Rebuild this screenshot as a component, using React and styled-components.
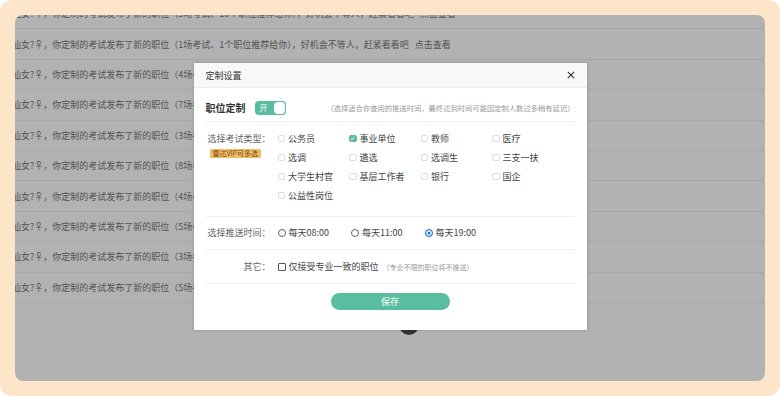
import React from 'react';
import styled, { createGlobalStyle, css } from 'styled-components';

const GlobalStyle = createGlobalStyle`
  html, body {
    margin: 0;
    padding: 0;
    background: #fff;
  }
  body {
    font-family: "Noto Sans CJK SC", "Noto Sans", sans-serif;
  }
  * { box-sizing: border-box; }
`;

const Frame = styled.div`
  width: 780px;
  height: 396px;
  padding: 15px;
  background: #fde5ca;
  border-radius: 12px;
`;

const Panel = styled.div`
  position: relative;
  height: 366px;
  background: #fff;
  border-radius: 8px;
  overflow: hidden;
`;

const List = styled.ul`
  list-style: none;
  margin: -16px 0 0 -3px;
  padding: 0;
`;

const Row = styled.li`
  height: 30.4px;
  display: flex;
  align-items: center;
  border-bottom: 1px solid #eee;
  font-size: 9px;
  color: #777;
  white-space: nowrap;
`;

const More = styled.span`
  margin-left: 6px;
`;

const Pager = styled.div`
  display: flex;
  align-items: center;
  justify-content: center;
  gap: 14px;
  margin-top: 12px;
  padding-left: 106px;
  font-size: 9px;
  color: #333;
`;

const Page = styled.span`
  display: inline-flex;
  align-items: center;
  justify-content: center;
  min-width: 20px;
  height: 20px;
  border-radius: 10px;
  ${p => p.$active && css`
    background: #4a4a4a;
    color: #fff;
  `}
`;

const Overlay = styled.div`
  position: absolute;
  inset: 0;
  background: rgba(0, 0, 0, 0.3);
  display: flex;
  justify-content: center;
  align-items: flex-start;
  padding-top: 48px;
`;

const Modal = styled.div`
  width: 393px;
  background: #fff;
  box-shadow: 0 0 3px rgba(0, 0, 0, 0.2);
`;

const Header = styled.div`
  height: 25px;
  display: flex;
  align-items: center;
  justify-content: space-between;
  padding: 0 10px 0 12px;
  background: #f8f8f8;
  border-bottom: 1px solid #ececec;
  font-size: 9px;
  color: #333;
`;

const Close = styled.button`
  display: flex;
  align-items: center;
  justify-content: center;
  width: 12px;
  height: 12px;
  padding: 0;
  border: none;
  background: none;
  cursor: pointer;
`;

const Body = styled.div`
  padding: 0 12px;
`;

const TitleRow = styled.div`
  display: flex;
  align-items: center;
  padding: 12px 0 6px;
  border-bottom: 1px solid #eee;
`;

const Heading = styled.span`
  font-size: 10px;
  font-weight: bold;
  color: #333;
`;

const Toggle = styled.div`
  display: flex;
  align-items: center;
  justify-content: space-between;
  width: 31px;
  height: 14px;
  margin-left: 9px;
  padding: 1px 1px 1px 5px;
  background: #5bbd9f;
  border-radius: 4px;
  color: #fff;
  font-size: 8px;
`;

const Knob = styled.span`
  width: 11px;
  height: 12px;
  background: #fff;
  border-radius: 4px;
`;

const Hint = styled.span`
  margin-left: auto;
  font-size: 7.3px;
  color: #999;
`;

const Section = styled.div`
  display: flex;
  align-items: flex-start;
  padding: ${p => p.$pad};
  border-bottom: 1px solid #eee;
`;

const LabelCol = styled.div`
  width: 65px;
  flex-shrink: 0;
  display: flex;
  flex-direction: column;
  align-items: flex-end;
`;

const Label = styled.span`
  line-height: 19px;
  font-size: 9px;
  color: #666;
  white-space: nowrap;
`;

const Badge = styled.span`
  align-self: flex-start;
  margin: 1px 0 0 4px;
  height: 9px;
  line-height: 9px;
  padding: 0 3px;
  font-size: 7px;
  color: #7a4a12;
  background: #f0bd67;
  border-radius: 1.5px;
  white-space: nowrap;
`;

const Grid = styled.div`
  display: grid;
  grid-template-columns: repeat(4, 71.5px);
  grid-auto-rows: 19px;
  margin-left: 7px;
`;

const Line = styled.div`
  display: flex;
  align-items: center;
  height: 19px;
  margin-left: 7px;
`;

const Option = styled.label`
  display: flex;
  align-items: center;
  gap: 3px;
  width: ${p => p.$w || 'auto'};
  font-size: 9px;
  color: #444;
  white-space: nowrap;
`;

const Box = styled.span`
  display: inline-flex;
  align-items: center;
  justify-content: center;
  width: 7.5px;
  height: 7.5px;
  border: 1px solid #dcdcdc;
  border-radius: 2px;
  background: #fff;
  ${p => p.$checked && css`
    border-color: #5bbd9f;
    background: #5bbd9f;
  `}
`;

const Square = styled.span`
  width: 8px;
  height: 8px;
  border: 1px solid #555;
  border-radius: 1px;
  background: #fff;
`;

const Radio = styled.span`
  width: 8px;
  height: 8px;
  border-radius: 50%;
  border: 1px solid #666;
  background: #fff;
  ${p => p.$checked && css`
    border-color: #1a73e8;
    background: #1a73e8;
    box-shadow: inset 0 0 0 1.5px #fff;
  `}
`;

const Small = styled.span`
  margin-left: 1px;
  font-size: 7px;
  color: #999;
`;

const Footer = styled.div`
  display: flex;
  justify-content: center;
  padding: 9px 0 20px;
`;

const SaveButton = styled.button`
  width: 119px;
  height: 17px;
  border: none;
  border-radius: 9px;
  background: #5bbd9f;
  color: #fff;
  font-family: inherit;
  font-size: 9px;
  cursor: pointer;
`;

const rows = [
  [5, 10], [1, 1], [4, 6], [7, 12], [3, 5], [8, 15], [4, 7], [5, 9], [3, 4], [5, 8],
];

const examTypes = [
  '公务员', '事业单位', '教师', '医疗',
  '选调', '遴选', '选调生', '三支一扶',
  '大学生村官', '基层工作者', '银行', '国企',
  '公益性岗位',
];

const times = ['每天08:00', '每天11:00', '每天19:00'];

const Check = () => (
  <svg width="5" height="5" viewBox="0 0 10 10">
    <path d="M1.5 5.2 L4 7.6 L8.6 2.6" fill="none" stroke="#fff" strokeWidth="1.8" />
  </svg>
);

export default function App() {
  return (
    <>
      <GlobalStyle />
      <Frame>
        <Panel>
          <List>
            {rows.map(([e, j], i) => (
              <Row key={i}>
                仙女?♀，你定制的考试发布了新的职位（{e}场考试、{j}个职位推荐给你），好机会不等人，赶紧看看吧
                <More>点击查看</More>
              </Row>
            ))}
          </List>
          <Pager>
            <span>首页</span>
            <span>上一页</span>
            <Page $active>1</Page>
            <Page>2</Page>
            <Page>3</Page>
            <span>下一页</span>
            <span>尾页</span>
          </Pager>

          <Overlay>
            <Modal>
              <Header>
                <span>定制设置</span>
                <Close aria-label="关闭">
                  <svg width="8" height="8" viewBox="0 0 8 8">
                    <path d="M0.8 0.8 L7.2 7.2 M7.2 0.8 L0.8 7.2" stroke="#333" strokeWidth="1.1" />
                  </svg>
                </Close>
              </Header>
              <Body>
                <TitleRow>
                  <Heading>职位定制</Heading>
                  <Toggle>
                    开
                    <Knob />
                  </Toggle>
                  <Hint>（选择适合你查阅的推送时间，最终达到时间可能因定制人数过多稍有延迟）</Hint>
                </TitleRow>

                <Section $pad="7px 0 11px">
                  <LabelCol>
                    <Label>选择考试类型：</Label>
                    <Badge>雷达VIP可多选</Badge>
                  </LabelCol>
                  <Grid>
                    {examTypes.map(t => (
                      <Option key={t}>
                        <Box $checked={t === '事业单位'}>{t === '事业单位' && <Check />}</Box>
                        {t}
                      </Option>
                    ))}
                  </Grid>
                </Section>

                <Section $pad="6px 0 7px">
                  <LabelCol>
                    <Label>选择推送时间：</Label>
                  </LabelCol>
                  <Line>
                    {times.map((t, i) => (
                      <Option key={t} $w={i < 2 ? '73.5px' : 'auto'}>
                        <Radio $checked={i === 2} />
                        {t}
                      </Option>
                    ))}
                  </Line>
                </Section>

                <Section $pad="7px 0">
                  <LabelCol>
                    <Label>其它：</Label>
                  </LabelCol>
                  <Line>
                    <Option>
                      <Square />
                      仅接受专业一致的职位
                      <Small>（专业不限的职位将不推送）</Small>
                    </Option>
                  </Line>
                </Section>
              </Body>
              <Footer>
                <SaveButton>保存</SaveButton>
              </Footer>
            </Modal>
          </Overlay>
        </Panel>
      </Frame>
    </>
  );
}
